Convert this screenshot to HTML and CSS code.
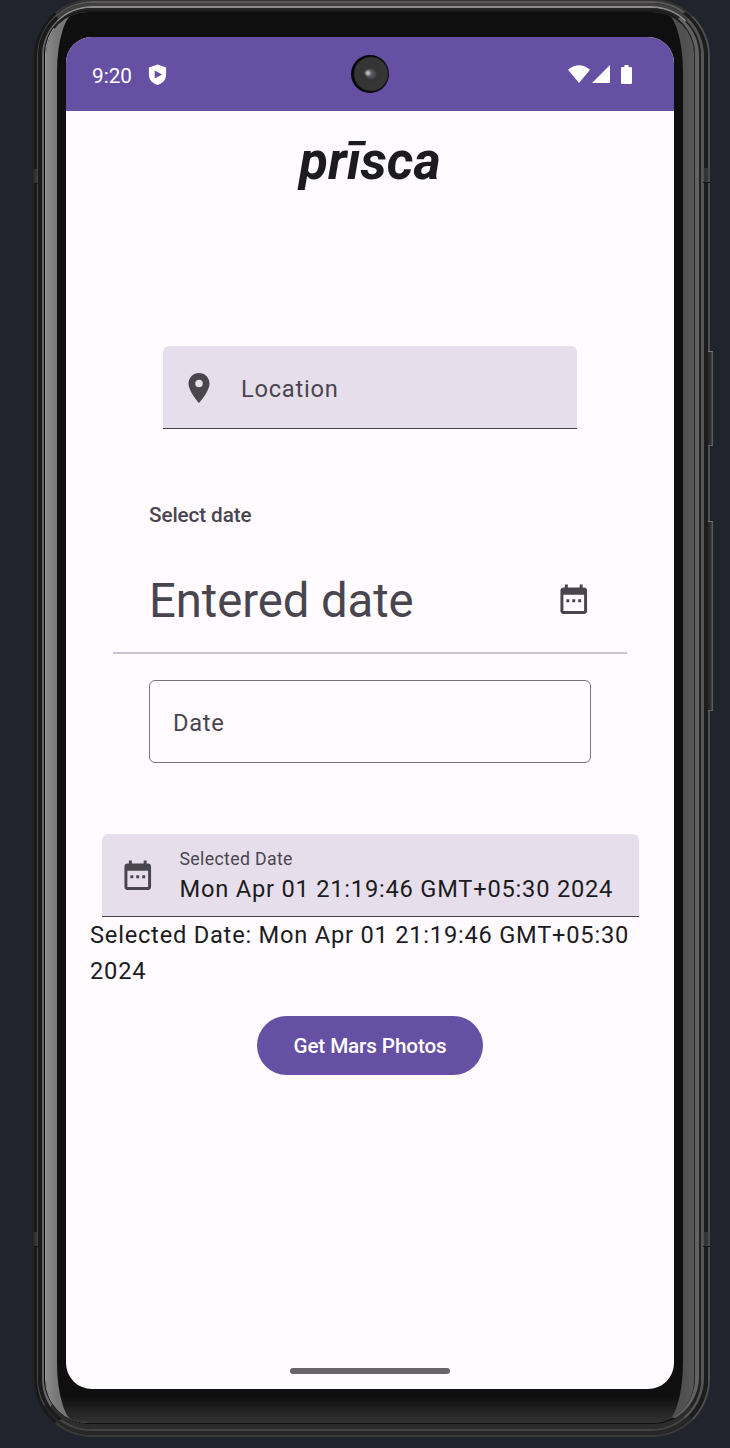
FILE: index.html
```html
<!DOCTYPE html>
<html lang="en">
<head>
<meta charset="utf-8">
<title>prīsca</title>
<link rel="stylesheet" href="styles.css">
</head>
<body>
<svg class="defs" width="0" height="0" aria-hidden="true">
  <symbol id="calendar" viewBox="0 0 24 24"><path fill="currentColor" d="M7 11h2v2H7zm4 0h2v2h-2zm4 0h2v2h-2z"/><path fill="currentColor" fill-rule="evenodd" d="M19 3h-1V1h-2v2H8V1H6v2H5c-1.100 0-2 .9-2 2v14c0 1.100.9 2 2 2h14c1.100 0 2-.9 2-2V5c0-1.100-.9-2-2-2zM5 8h14v11H5z"/></symbol>
</svg>
<div class="phone">
  <i class="key power"></i><i class="key volume"></i>
  <i class="seam seam-a"></i><i class="seam seam-b"></i><i class="seam seam-c"></i><i class="seam seam-d"></i>
  <div class="ring ring-a"><div class="ring ring-b"><div class="ring ring-c"><div class="ring ring-d"><div class="ring ring-e"><div class="ring ring-f">
  <div class="glass"><div class="bezel">
    <main class="screen">
      <header class="status">
        <span class="time">9:20</span>
        <svg class="shield" viewBox="0 0 18 22"><path fill="#fff" fill-rule="evenodd" d="M9 .6 17.600 3.600v7.200c0 5-3.600 8.600-8.600 10.300C4 19.400.4 15.800.4 10.800V3.600zM6.200 6.500v8l7.400-4z"/></svg>
        <span class="camera"></span>
        <svg class="signals" viewBox="0 0 66 20"><path fill="#fff" d="M0 4.700Q11-4.100 22 4.700L11 18zM42 .1V18H24zM56.500 0h4v2h2.200q1.300 0 1.300 1.300v14.400q0 1.300-1.300 1.300h-8.400q-1.300 0-1.300-1.300V3.300Q53 2 54.300 2h2.200z"/></svg>
      </header>
      <h1 class="brand">prīsca</h1>
      <div class="field location">
        <svg class="pin" viewBox="5 2 14 20"><path fill="currentColor" d="M12 2C8.130 2 5 5.130 5 9c0 5.250 7 13 7 13s7-7.750 7-13c0-3.870-3.130-7-7-7zm0 9.500a2.500 2.500 0 1 1 0-5 2.500 2.500 0 0 1 0 5z"/></svg>
        <span class="hint">Location</span>
      </div>
      <section class="picker">
        <div class="picker-title">Select date</div>
        <div class="picker-head"><span>Entered date</span><svg class="cal"><use href="#calendar"/></svg></div>
        <div class="outlined">Date</div>
      </section>
      <div class="field selected">
        <svg class="cal"><use href="#calendar"/></svg>
        <div class="stack"><span class="label">Selected Date</span><span class="value">Mon Apr 01 21:19:46 GMT+05:30 2024</span></div>
      </div>
      <p class="summary">Selected Date: Mon Apr 01 21:19:46 GMT+05:30 2024</p>
      <button class="action">Get Mars Photos</button>
      <div class="handle"></div>
    </main>
  </div></div>
  </div></div></div></div></div></div>
</div>
</body>
</html>
```
FILE: styles.css
```css
* { box-sizing: border-box; }
body { margin: 0; background: #21242d; font-family: Roboto, "Noto Sans", sans-serif; height: 1448px; overflow: hidden; }
.defs { position: absolute; }
.phone { position: relative; width: 676px; height: 1438px; margin: -1px 0 0 34px; }

/* Metal frame, from the outside in */
.ring { height: 100%; border-style: solid; background: #1b1b1b; }
.ring-a { border-width: 2px 2px 2px 3px; border-color: #333 #505050 #3a3a3a #191a1a; border-radius: 58px; }
.ring-b { border-width: 2px 4px 4px 1px; border-color: #5a5859 #1d1d1d #272727 #484848; border-radius: 56px; }
.ring-c { border-width: 3px 3px 2px 4px; border-color: #414041 #555 #444 #1b1b1b; border-radius: 53px; }
.ring-d { border-width: 2px 2px 5px 2px; border-color: #8f8a8b #222 #2c2c2c #666; border-radius: 50px; }
.ring-e { border-width: 2px 4px 1px 1px; border-color: #252525 #626262 #111 #080808; border-radius: 47px; }
.ring-f { border-width: 2px 1px 0 1px; border-color: #1b1b1b #2a2a2a #111 #999; border-radius: 44px; }
.glass { height: 100%; padding: 0 11px; border-radius: 42px; overflow: hidden; background: linear-gradient(90deg, #8a8a8a 0, #777 11px, #505050 50%, #505050 638px, #585858 100%); }
.bezel { height: 100%; padding: 25px 9px 34px; border-radius: 20px / 60px; background: linear-gradient(#0e0f0e calc(100% - 27px), #323232); }

.key { position: absolute; left: 674px; width: 5px; background: linear-gradient(90deg, #242424, #333 60%, #686868); border-top: 1px solid #777; border-bottom: 1px solid #666; }
.power { top: 352px; height: 95px; }
.volume { top: 522px; height: 190px; }
.seam { position: absolute; z-index: 1; height: 15px; background: #4a4a4a88; border-bottom: 1px solid #151515; }
.seam-a { left: 0; top: 170px; width: 4px; }
.seam-b { left: 669px; top: 169px; width: 7px; }
.seam-c { left: 0; top: 1233px; width: 4px; }
.seam-d { left: 669px; top: 1233px; width: 7px; }

.screen { height: 1352px; border-radius: 26px; overflow: hidden; background: #fffbff; display: flex; flex-direction: column; align-items: center; color: #1c1b1f; }
.status { flex: none; width: 100%; height: 74px; padding: 0 40px 0 27px; background: #6650a3; color: #fff; display: grid; grid-template-columns: 55px 203px 38px 1fr; align-items: center; }
.time { font-size: 20.700px; padding-top: 4px; margin-left: -1px; }
.shield { width: 19px; height: 22px; margin-top: 1px; }
.camera { width: 38px; height: 38px; border-radius: 50%; background: radial-gradient(circle at 17px 18px, #ddd 0, #a2a0a3 1.500px, transparent 4px), radial-gradient(circle at 20px 19px, #5b5b69 0, #4c4c53 4px, #343434 6px, #363636 16px, #050505 18px); }
.signals { width: 66px; height: 20px; justify-self: end; margin-top: 1px; }
.brand { margin: 20px 0 0; height: 61px; font-size: 52.600px; line-height: 61px; font-style: italic; font-weight: 700; }

.field { flex: none; display: flex; align-items: center; height: 83px; background: #e6dfeb; border-bottom: 1.500px solid #49454f; border-radius: 6px 6px 0 0; color: #49454f; font-size: 23.660px; letter-spacing: .74px; }
.location { width: 414px; margin-top: 154px; padding: 2px 25px 0; gap: 31px; }
.hint { padding-top: 2px; }
.pin { width: 22px; height: 30px; }
.picker { width: 514px; margin-top: 73px; color: #49454f; }
.picker-title { padding-left: 36px; font-size: 20.700px; line-height: 26px; font-weight: 500; letter-spacing: -.1px; }
.picker-head { display: flex; justify-content: space-between; align-items: center; height: 126px; padding: 22px 36px 0; border-bottom: 2px solid #cac4d0; font-size: 47.300px; letter-spacing: -.08px; }
.cal { flex: none; width: 35.500px; height: 35.500px; }
.outlined { margin: 26px 36px 0; height: 83px; border: 1.500px solid #79747e; border-radius: 6px; padding: 2px 23px 0; display: flex; align-items: center; font-size: 23.660px; letter-spacing: .74px; }
.selected { width: 537px; margin-top: 71px; padding: 4px 18px 0; gap: 24.500px; }
.stack { display: flex; flex-direction: column; white-space: nowrap; }
.label { font-size: 17.700px; line-height: 23px; letter-spacing: .35px; }
.value { color: #1c1b1f; line-height: 36px; letter-spacing: .78px; }
.summary { width: 560px; margin: 1px 0 0; font-size: 23.660px; line-height: 35.500px; letter-spacing: .77px; }
.action { width: 226px; height: 59px; margin-top: 27px; padding: 1px 0 0; border: 0; border-radius: 30px; background: #6650a3; color: #fff; font: 500 20.700px Roboto, sans-serif; letter-spacing: -.13px; }
.handle { width: 160px; height: 6px; margin: auto 0 15px; border-radius: 3px; background: #67656a; }
```
